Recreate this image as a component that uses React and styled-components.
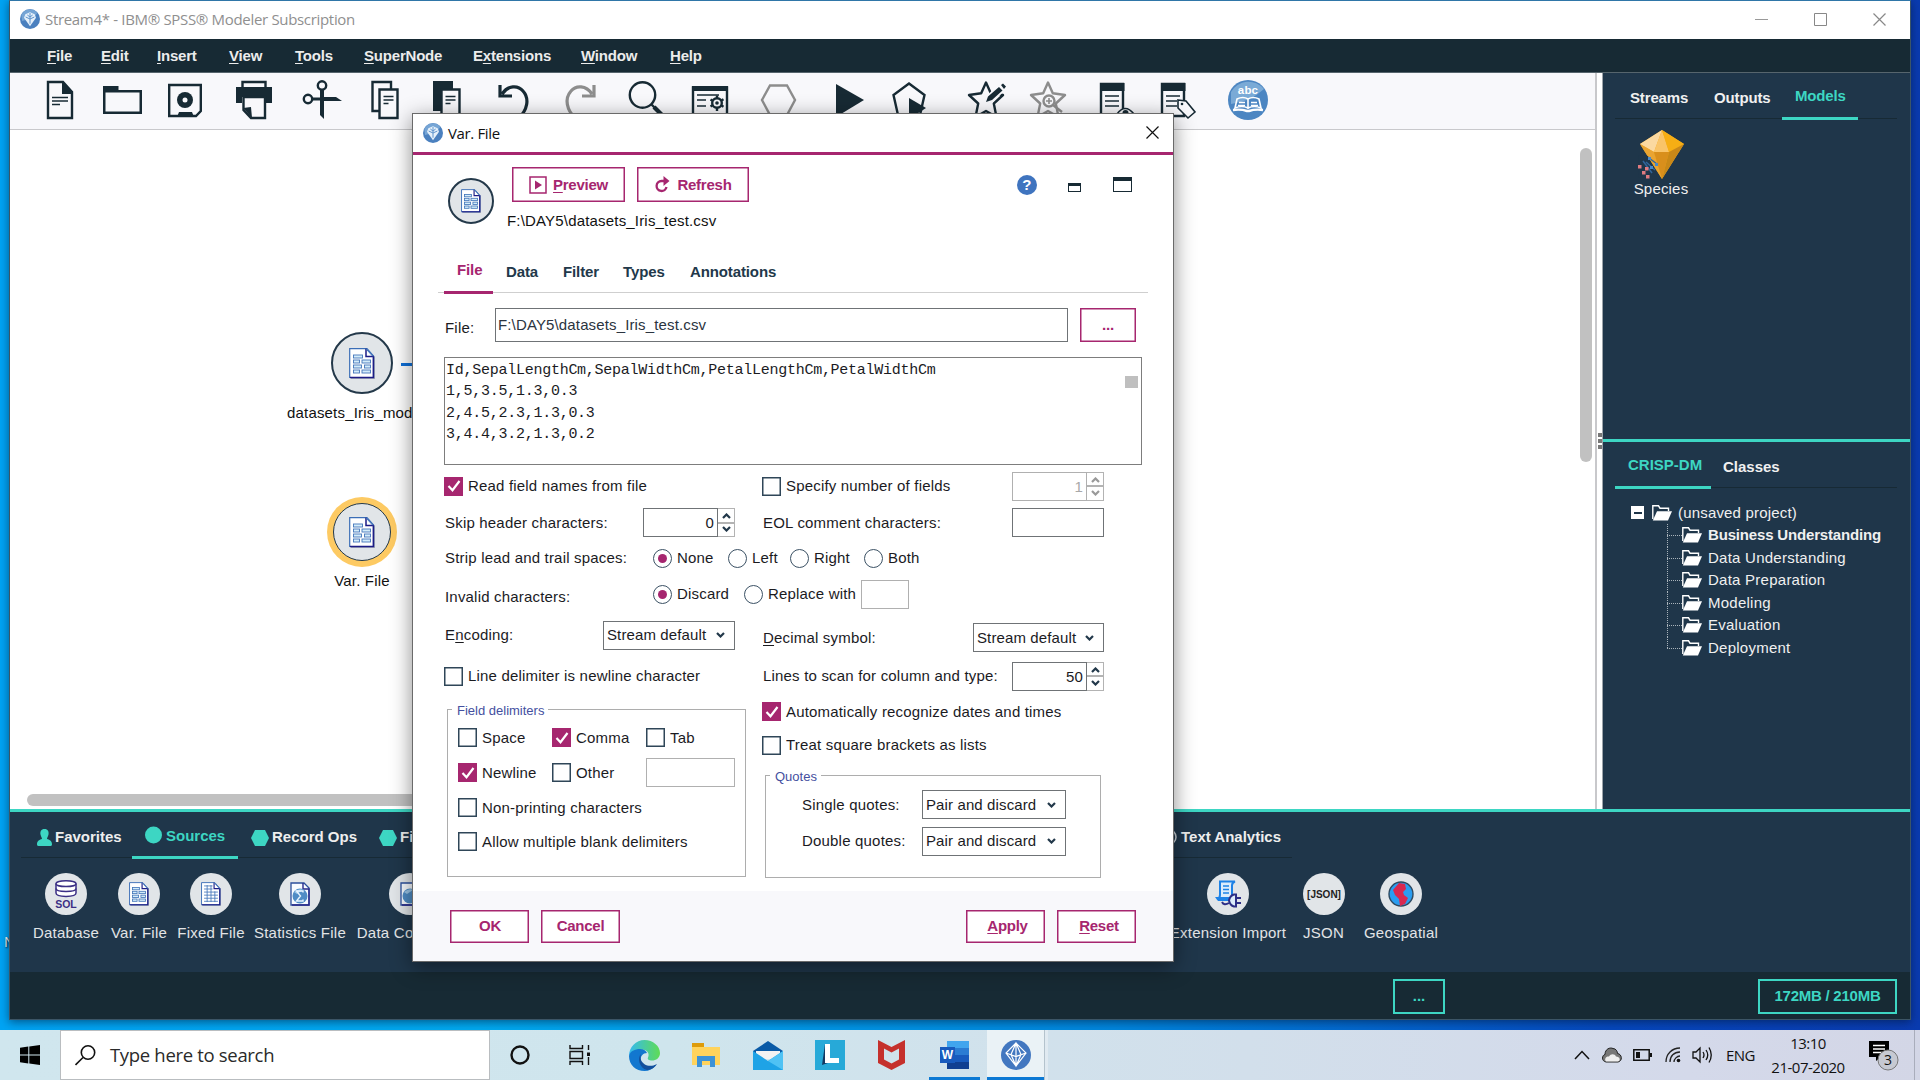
import React from "react";
import styled, { createGlobalStyle, css } from "styled-components";

const C = {
  ink: "#172a34",
  panel: "#1f364a",
  teal: "#3dd6c3",
  magenta: "#a6266f",
  light: "#f8f8fb",
  text: "#1b1b1f",
  disc: "#e1e5e8",
};
const ARIAL = '"Liberation Sans", Arial, sans-serif';
const SEGOE = '"Open Sans", "Noto Sans", sans-serif';

const Global = createGlobalStyle`
  * { box-sizing: border-box; }
  html, body { margin: 0; padding: 0; overflow: hidden; }
  body { font: 15px/20px ${ARIAL}; letter-spacing: 0.18px; color: ${C.text}; }
  svg { display: block; flex: none; }
  u { text-underline-offset: 2px; text-decoration-thickness: 1px; }
`;

/* ---------- shell ---------- */
const Desktop = styled.div`
  position: relative;
  width: 1920px;
  height: 1080px;
  overflow: hidden;
  display: flex;
  flex-direction: column;
  background: linear-gradient(90deg, #00a4f4 0, #00aaf0 25%, #0086dd 58%, #0648bd 84%, #0a3bb0 100%);
`;
const DesktopLabel = styled.span`
  position: absolute;
  left: 4px;
  top: 932px;
  color: #fff;
  font: 14px/20px ${SEGOE};
  text-shadow: 1px 1px 2px #000;
`;
const Window = styled.div`
  position: relative;
  margin-left: 9px;
  width: 1902px;
  height: 1020px;
  border: 1px solid #3c5566;
  border-top-color: #2f76a8;
  display: flex;
  flex-direction: column;
  background: #fff;
  box-shadow: 0 2px 9px rgba(0, 20, 50, 0.55);
`;
const TitleBar = styled.div`
  height: 38px;
  flex: none;
  display: flex;
  align-items: center;
  padding: 0 0 2px 10px;
  font: 15px/20px ${SEGOE};
  letter-spacing: -0.32px;
  color: #8f8f8f;
`;
const TitleText = styled.span`
  margin-left: 5px;
  flex: 1;
  white-space: nowrap;
`;
const WinControls = styled.div`
  display: flex;
  gap: 46px;
  margin-right: 24px;
`;
const MenuBar = styled.nav`
  height: 34px;
  flex: none;
  display: flex;
  align-items: center;
  padding-left: 37px;
  background: ${C.ink};
  border-bottom: 1px solid #56656d;
  color: #ececec;
  font-weight: bold;
  letter-spacing: -0.2px;
`;
const MenuItem = styled.span`
  width: ${(p) => p.$w}px;
  white-space: nowrap;
`;
const Middle = styled.div`
  flex: 1;
  display: flex;
  min-height: 0;
`;
const Workspace = styled.div`
  width: 1587px;
  display: flex;
  flex-direction: column;
  border-right: 2px solid #c8c8cb;
`;
const Toolbar = styled.div`
  height: 57px;
  flex: none;
  display: flex;
  padding: 7px 0 0 30px;
  background: ${C.light};
  border-bottom: 1px solid #c9c9cc;
`;
const Tool = styled.svg.attrs({ width: 40, height: 40, viewBox: "0 0 40 40", fill: "none" })`
  margin-left: ${(p) => p.$gap || 0}px;
  color: ${(p) => (p.$off ? "#8d8d8d" : C.ink)};
  stroke: currentColor;
  stroke-width: ${(p) => p.$sw || 2.4};
  .f { fill: currentColor; stroke: none; }
  .w { fill: ${C.light}; }
  .t { stroke-width: 1.6; }
`;
const Canvas = styled.div`
  position: relative;
  flex: 1;
`;
const VThumb = styled.div`
  position: absolute;
  right: 3px;
  top: 18px;
  width: 12px;
  height: 314px;
  border-radius: 6px;
  background: #c1c1c1;
`;
const HThumb = styled.div`
  position: absolute;
  left: 17px;
  bottom: 3px;
  width: 820px;
  height: 12px;
  border-radius: 6px;
  background: #c1c1c1;
`;
const CanvasNode = styled.div`
  position: absolute;
  left: ${(p) => p.$x}px;
  top: ${(p) => p.$y}px;
  display: flex;
  flex-direction: column;
  align-items: ${(p) => (p.$start ? "flex-start" : "center")};
  color: #111;
  white-space: nowrap;
`;
const Link = styled.div`
  position: absolute;
  left: 391px;
  top: 233px;
  width: 40px;
  height: 3px;
  background: #0f6fd8;
`;
const Disc = styled.div`
  width: ${(p) => p.$d}px;
  height: ${(p) => p.$d}px;
  flex: none;
  border-radius: 50%;
  background: ${C.disc};
  border: ${(p) => p.$b || 0}px solid #24394a;
  display: flex;
  align-items: center;
  justify-content: center;
  margin: ${(p) => p.$mt || 0}px 0 0 ${(p) => p.$ml || 0}px;
  ${(p) => p.$sel && css`box-shadow: 0 0 0 6px #fdca63;`}
`;
const NodeName = styled.span`
  margin-top: ${(p) => p.$mt}px;
`;
const Gutter = styled.div`
  width: 6px;
  display: flex;
  flex-direction: column;
  align-items: center;
  gap: 2px;
  padding-top: 360px;
  border-right: 1px solid #9da4aa;
  i { width: 4px; height: 4px; background: #777; }
`;

/* ---------- side panels ---------- */
const Side = styled.aside`
  flex: 1;
  background: ${C.panel};
  color: #f0f0f0;
  display: flex;
  flex-direction: column;
`;
const SidePane = styled.section`
  height: ${(p) => p.$h};
  flex: ${(p) => (p.$h ? "none" : 1)};
  padding: 0 13px 0 12px;
`;
const Crisp = styled(SidePane)`
  border-top: 3px solid ${C.teal};
`;
const TabStrip = styled.div`
  display: flex;
  height: ${(p) => p.$h}px;
  width: ${(p) => (p.$w ? p.$w + "px" : "auto")};
  border-bottom: 1px solid ${(p) => p.$line || "#172a35"};
  font-weight: bold;
  letter-spacing: ${(p) => p.$ls || 0}px;
`;
const Tab = styled.div`
  width: ${(p) => p.$w}px;
  flex: none;
  display: flex;
  align-items: flex-end;
  gap: ${(p) => p.$g || 0}px;
  padding-left: ${(p) => p.$pl}px;
  padding-bottom: ${(p) => p.$pb}px;
  white-space: nowrap;
  svg { margin-bottom: 1px; }
  ${(p) => p.$on && css`
    color: ${p.$on};
    border-bottom: 3px solid ${p.$on};
    margin-bottom: -2px;
  `}
`;
const Model = styled.div`
  width: 60px;
  margin: 10px 0 0 16px;
  display: flex;
  flex-direction: column;
  align-items: center;
`;
const Tree = styled.div`
  padding: 13px 0 0 16px;
`;
const TreeRoot = styled.div`
  display: flex;
  align-items: center;
  height: 23px;
  span { margin-left: 6px; }
`;
const Minus = styled.i`
  width: 13px;
  height: 13px;
  margin-right: 8px;
  background: #fff;
  display: flex;
  align-items: center;
  justify-content: center;
  &::after { content: ""; width: 8px; height: 2px; background: ${C.panel}; }
`;
const Branches = styled.div`
  margin-left: 36px;
`;
const Branch = styled.div`
  height: 22.5px;
  display: flex;
  align-items: center;
  font-weight: ${(p) => (p.$b ? "bold" : "normal")};
  letter-spacing: ${(p) => (p.$b ? -0.17 : 0.25)}px;
  span { margin-left: 6px; white-space: nowrap; }
`;
const Twig = styled.i`
  align-self: stretch;
  width: 15px;
  background:
    repeating-linear-gradient(90deg, #aab4bb 0 1px, transparent 1px 2px) 0 11px / 15px 1px no-repeat,
    repeating-linear-gradient(180deg, #aab4bb 0 1px, transparent 1px 2px) 0 0 / 1px ${(p) => (p.$last ? "12px" : "100%")} no-repeat;
`;

/* ---------- palette and status ---------- */
const Palette = styled.section`
  height: 163px;
  flex: none;
  background: ${C.panel};
  border-top: 3px solid ${C.teal};
  color: #eee;
`;
const PaletteTabs = styled(TabStrip)`
  margin-left: 11px;
`;
const PaletteItems = styled.div`
  display: flex;
  padding: 15px 0 0 17px;
`;
const PaletteItem = styled.div`
  width: ${(p) => p.$w}px;
  margin-left: ${(p) => p.$ml || 0}px;
  flex: none;
  display: flex;
  flex-direction: column;
  align-items: center;
  gap: 8px;
  white-space: nowrap;
  color: #e2e4e6;
  letter-spacing: 0.25px;
`;
const StatusBar = styled.footer`
  height: 47px;
  flex: none;
  display: flex;
  align-items: center;
  justify-content: flex-end;
  gap: 313px;
  padding: 1px 13px 0 0;
  background: ${C.ink};
`;
const StatusBox = styled.div`
  width: ${(p) => p.$w}px;
  height: 35px;
  border: 2px solid ${C.teal};
  color: ${C.teal};
  font-weight: bold;
  letter-spacing: ${(p) => p.$ls || 0}px;
  display: flex;
  align-items: center;
  justify-content: center;
`;

/* ---------- dialog ---------- */
const Dialog = styled.div`
  position: absolute;
  left: 412px;
  top: 113px;
  width: 762px;
  height: 849px;
  border: 1px solid #6a6a6a;
  background: #fff;
  display: flex;
  flex-direction: column;
  box-shadow: 0 5px 20px rgba(0, 0, 0, 0.45);
`;
const DialogTitle = styled.div`
  height: 41px;
  flex: none;
  display: flex;
  align-items: center;
  padding: 0 14px 1px 10px;
  border-bottom: 3px solid ${C.magenta};
  font: 15px/20px ${SEGOE};
  letter-spacing: -0.36px;
  color: #111;
`;
const Head = styled.div`
  height: 92px;
  display: flex;
  padding: 12px 41px 0 35px;
`;
const HeadMain = styled.div`
  flex: 1;
  padding-left: 13px;
  color: #111;
`;
const HeadButtons = styled.div`
  display: flex;
  gap: 12px;
  padding: 0 0 9px 5px;
`;
const HeadTools = styled.div`
  display: flex;
  align-items: flex-end;
  height: 25px;
`;
const Button = styled.button`
  width: ${(p) => p.$w}px;
  height: ${(p) => p.$h}px;
  padding: 0 0 0 ${(p) => p.$pl || 0}px;
  margin-left: ${(p) => p.$ml || 0}px;
  border: 1px solid ${C.magenta};
  box-shadow: inset 0 0 0 0.5px ${C.magenta};
  background: #fff;
  color: ${C.magenta};
  font: bold 15px/20px ${ARIAL};
  letter-spacing: -0.25px;
  display: flex;
  align-items: center;
  justify-content: center;
  gap: ${(p) => p.$g || 0}px;
`;
const Help = styled.span`
  width: 20px;
  height: 20px;
  border-radius: 50%;
  background: #3f74bf;
  color: #fff;
  font: bold 15px/20px ${ARIAL};
  text-align: center;
  margin: 0 31px -3px 0;
`;
const MiniWin = styled.i`
  width: ${(p) => p.$w}px;
  height: ${(p) => p.$h}px;
  border: 1.5px solid ${C.ink};
  border-top-width: ${(p) => p.$t}px;
  margin-right: ${(p) => p.$mr || 0}px;
`;
const DialogTabs = styled(TabStrip)`
  margin: 0 25px;
  padding-left: 6px;
  color: #22384a;
`;
const FileRow = styled.div`
  height: 34px;
  margin: 15px 0 0 32px;
  display: flex;
  align-items: center;
`;
const Cap = styled.span`
  width: ${(p) => (p.$w ? p.$w + "px" : "auto")};
  flex: none;
  white-space: nowrap;
  padding-left: ${(p) => p.$pl || 0}px;
  padding-top: ${(p) => p.$pt || 0}px;
  letter-spacing: 0.19px;
`;
const Field = styled.div`
  width: ${(p) => p.$w}px;
  height: ${(p) => p.$h || 29}px;
  flex: none;
  border: 1px solid ${(p) => (p.$dim ? "#b0b0b0" : "#6f7376")};
  padding: 0 2px;
  display: flex;
  align-items: center;
  letter-spacing: 0.14px;
  color: #2b3440;
  background: #fff;
`;
const TextArea = styled.div`
  width: 698px;
  height: 108px;
  margin: 15px 0 0 31px;
  border: 1px solid #7d7d7d;
  padding: 2px 3px 0 1px;
  display: flex;
  justify-content: space-between;
`;
const Mono = styled.pre`
  margin: 0;
  font: 15px/21.33px "Liberation Mono", "Courier New", monospace;
  letter-spacing: -0.26px;
`;
const AreaThumb = styled.i`
  width: 13px;
  height: 12px;
  margin-top: 16px;
  background: #bfbfbf;
`;
const Form = styled.div`
  padding: 4px 0 0 31px;
  flex: 1;
`;
const Row = styled.div`
  height: ${(p) => p.$h}px;
  display: flex;
  align-items: center;
`;
const Half = styled.div`
  width: ${(p) => p.$w || 318}px;
  flex: none;
  display: flex;
  align-items: center;
  padding-top: ${(p) => p.$pt || 0}px;
`;
const Columns = styled.div`
  display: flex;
`;
const Col = styled.div`
  width: ${(p) => p.$w}px;
`;
const CheckWrap = styled.label`
  display: flex;
  align-items: center;
  gap: ${(p) => p.$g || 5}px;
  width: ${(p) => (p.$w ? p.$w + "px" : "auto")};
  flex: none;
  white-space: nowrap;
`;
const Box = styled.i`
  width: 19px;
  height: 19px;
  border: 1px solid ${(p) => (p.$on ? C.magenta : "#2f4658")};
  box-shadow: inset 0 0 0 0.5px ${(p) => (p.$on ? C.magenta : "#2f4658")};
  background: ${(p) => (p.$on ? C.magenta : "#fff")};
  display: flex;
  align-items: center;
  justify-content: center;
`;
const Dot = styled.i`
  width: 19px;
  height: 19px;
  border: 1px solid #3b5164;
  border-radius: 50%;
  display: flex;
  align-items: center;
  justify-content: center;
  &::after {
    content: "";
    width: 9px;
    height: 9px;
    border-radius: 50%;
    background: ${(p) => (p.$on ? C.magenta : "transparent")};
  }
`;
const SpinWrap = styled.div`
  width: 92px;
  height: 29px;
  flex: none;
  display: flex;
`;
const SpinValue = styled.div`
  flex: 1;
  border: 1px solid ${(p) => (p.$off ? "#b0b0b0" : "#6f7376")};
  color: ${(p) => (p.$off ? "#a8a8a8" : C.text)};
  text-align: right;
  padding: 4px 3px 0 0;
`;
const SpinArrows = styled.div`
  width: 17px;
  display: flex;
  flex-direction: column;
  justify-content: space-between;
  border: 1px solid #b3b3b3;
  border-left: 0;
  background: linear-gradient(#b3b3b3, #b3b3b3) 0 50% / 100% 2px no-repeat;
  padding: 4px 0 4px 4px;
`;
const SelectBox = styled.div`
  width: ${(p) => p.$w}px;
  height: 29px;
  flex: none;
  border: 1px solid #6f7376;
  padding: 0 9px 0 3px;
  display: flex;
  align-items: center;
  justify-content: space-between;
  white-space: nowrap;
  letter-spacing: 0.12px;
`;
const Group = styled.fieldset`
  margin: ${(p) => p.$mt}px 0 0 3px;
  width: ${(p) => p.$w}px;
  height: ${(p) => p.$h}px;
  border: 1px solid #adadad;
  padding: 3px 0 0 ${(p) => p.$indent}px;
  min-width: 0;
`;
const Legend = styled.legend`
  margin-left: ${(p) => 4 - p.$indent}px;
  padding: 0 4px 0 5px;
  height: 16px;
  font-size: 13px;
  line-height: 20px;
  letter-spacing: 0;
  color: #4450a0;
`;
const DialogFoot = styled.div`
  height: 70px;
  flex: none;
  background: ${C.light};
  display: flex;
  align-items: center;
  gap: 12px;
  padding: 0 37px 0 37px;
`;
const Spacer = styled.span`
  flex: 1;
`;

/* ---------- taskbar ---------- */
const Taskbar = styled.div`
  position: relative;
  margin-top: 10px;
  height: 50px;
  display: flex;
  align-items: center;
  background: linear-gradient(90deg, #d0e6ee 0, #cfe5ed 35%, #d2dfeb 65%, #d4d9ea 88%, #d3d6e6 100%);
  font: 15px/24px ${SEGOE};
  color: #111;
`;
const Start = styled.div`
  width: 60px;
  padding-left: 20px;
`;
const Search = styled.div`
  width: 430px;
  height: 50px;
  border: 1px solid #b9bdc0;
  background: #fff;
  display: flex;
  align-items: center;
  padding-left: 14px;
  gap: 14px;
  font-size: 18.5px;
  letter-spacing: -0.32px;
  color: #2a2a2a;
`;
const TaskButton = styled.div`
  width: ${(p) => p.$w}px;
  height: 50px;
  flex: none;
  display: flex;
  align-items: center;
  justify-content: center;
  background: ${(p) => (p.$on ? "#eaf2f6" : "transparent")};
  border-bottom: ${(p) => (p.$run ? "3px solid #0c79d4" : "0")};
  padding-top: ${(p) => (p.$run ? 3 : 0)}px;
  margin-left: ${(p) => p.$ml || 0}px;
`;
const Stacked = styled.i`
  width: 4px;
  height: 50px;
  border-left: 1px solid #b4c3cd;
  background: #e0eaf1;
`;
const Tray = styled.div`
  display: flex;
  align-items: center;
  margin-left: auto;
`;
const TrayIcon = styled.svg`
  margin-right: ${(p) => p.$mr}px;
`;
const Lang = styled.span`
  width: 43px;
  letter-spacing: -0.6px;
`;
const Clock = styled.div`
  width: 78px;
  text-align: center;
  letter-spacing: -0.5px;
  margin-right: 21px;
  white-space: nowrap;
`;
const ShowDesktop = styled.i`
  width: 6px;
  height: 50px;
  margin-left: 14px;
  border-left: 1px solid #a9adbb;
`;

/* ---------- drawings ---------- */
const Gem = ({ s = 20 }) => (
  <svg width={s} height={s} viewBox="0 0 30 30">
    <circle cx="15" cy="15" r="15" fill="#4a80bf" />
    <path d="M2 9A14 14 0 0 1 26 6L20 14 3 18Z" fill="#8db8e0" opacity=".65" />
    <path d="M8 8L15 5L22 8L24 13L15 26L6 13Z" fill="#e5f0fa" />
    <path d="M15 6V22M8.5 12L15 15L21.5 12M11 9L15 12L19 9" stroke="#5f94cd" strokeWidth="1.5" fill="none" />
  </svg>
);
const CloseX = ({ c = "#111", s = 13 }) => (
  <svg width={s} height={s} viewBox="0 0 13 13" stroke={c} strokeWidth="1.2"><path d="M.5.5l12 12M12.5.5l-12 12" /></svg>
);
const Doc = ({ w = 26, h = 31, dense }) => (
  <svg width={w} height={h} viewBox="0 0 26 31">
    <path d="M2 2h17l7 7v22H2z" fill="#a4abb8" />
    <path d="M.7.7H18L24.5 8v21.500H.7z" fill="#fff" stroke="#3a6db6" strokeWidth="1.200" />
    <path d="M17 .8V8.500h7.400M24.400 8v21.500H1" fill="none" stroke="#1d1c86" strokeWidth="1.500" />
    <path d="M17 1l7 7.500" stroke="#3a6db6" strokeWidth="1" />
    <g fill="#d3ecf9" stroke="#4577ba" strokeWidth={w < 24 ? 1.1 : 0.9}>
      {dense ? (
        <path d="M4 5h11M4 9h11M4 13h18M4 17h18M4 21h18M4 25h18M8 4v22M13 4v22M18 12v14" />
      ) : (
        <>
          <rect x="4.500" y="7" width="9" height="3" /><rect x="4.500" y="12" width="6" height="3" />
          <rect x="13" y="12" width="8.500" height="3" /><rect x="4.500" y="17" width="8" height="3" />
          <rect x="15.500" y="17" width="6" height="3" /><rect x="4.500" y="22" width="6" height="3" />
          <rect x="13" y="22" width="8.500" height="3" />
        </>
      )}
    </g>
  </svg>
);
const SphereDoc = ({ mark }) => (
  <svg width="20" height="24" viewBox="0 0 20 24">
    <path d="M1 1h13l5 5v17H1z" fill="#f7fbff" stroke="#2b4f9c" strokeWidth="1.3" />
    <path d="M13 1v6h6v16H2" fill="none" stroke="#28288a" strokeWidth="1.4" />
    <circle cx="10" cy="14" r="7.500" fill="#4f8cc5" />
    <path d="M4 10q5-4 9-2l-6 4z" fill="#9cc6e8" />
    {mark && <path d="M13 10.500V9H6.500l4 5-4 5H13v-1.500" fill="none" stroke="#e8f4ff" strokeWidth="1.400" />}
  </svg>
);
const Sql = () => (
  <svg width="24" height="28" viewBox="0 0 24 28" fill="#fff" stroke="#3b2f85" strokeWidth="1.500">
    <path d="M2 3.500v9.500c0 4.500 20 4.500 20 0V3.500" />
    <path d="M2 8.500c0 4 20 4 20 0" fill="none" />
    <ellipse cx="12" cy="3.700" rx="10" ry="2.900" />
    <text x="12" y="27.500" textAnchor="middle" fontFamily="Liberation Sans" fontWeight="bold" fontSize="10.500" letterSpacing="0" fill="#3b2f85" stroke="none">SQL</text>
  </svg>
);
const Folder = () => (
  <svg width="20" height="16" viewBox="0 0 20 16">
    <path d="M.8 14V.8h5.700l1.500 2.400h8.500V6" fill="none" stroke="#fff" strokeWidth="1.400" />
    <path d="M5 6.300h15l-4 9.200H.8z" fill="#fff" />
  </svg>
);
const Chev = ({ up, c = "#22384a" }) => (
  <svg width="9" height="6" viewBox="0 0 9 6"><path d={up ? "M1 5l3.500-3.500L8 5" : "M1 1l3.500 3.500L8 1"} fill="none" stroke={c} strokeWidth="2.200" /></svg>
);
const Hex = () => (
  <svg width="18" height="16" viewBox="0 0 18 16"><path d="M4 0h10l4 8-4 8H4L0 8z" fill={C.teal} /></svg>
);
const STAR = "M20 2.500l4.800 10.800 12.200 1.700-9.200 8.500 2.700 13.500L20 31 9.500 37l2.700-13.500L3 15l12.200-1.700z";

const Check = ({ on, w, children }) => (
  <CheckWrap $w={w}>
    <Box $on={on}>
      {on && <svg width="14" height="12" viewBox="0 0 14 12"><path d="M1.500 6l4 4.200L12.500 1" fill="none" stroke="#fff" strokeWidth="2.200" /></svg>}
    </Box>
    <span>{children}</span>
  </CheckWrap>
);
const Radio = ({ on, w, children }) => (
  <CheckWrap $w={w}><Dot $on={on} /><span>{children}</span></CheckWrap>
);
const Spin = ({ value, off }) => (
  <SpinWrap>
    <SpinValue $off={off}>{value}</SpinValue>
    <SpinArrows><Chev up c={off ? "#999" : undefined} /><Chev c={off ? "#999" : undefined} /></SpinArrows>
  </SpinWrap>
);
const Select = ({ w, children }) => (
  <SelectBox $w={w}><span>{children}</span><Chev /></SelectBox>
);

const Tools = () => (
  <Toolbar>
    <Tool><path d="M8 2h15l9 10v26H8z" /><path className="f" d="M22 1l11 11v2H22z" /><path className="t" d="M12 17.500h16M12 21h16M12 24.500h8" /></Tool>
    <Tool $gap={22}><path className="f" fillRule="evenodd" d="M1 6h15.500v4H40v24H1zM3.500 12.500v19h34v-19z" /></Tool>
    <Tool $gap={23}><path d="M4.200 5h31.600v26L31 36H4.200z" /><circle className="f" cx="20" cy="20" r="8" /><circle cx="20" cy="20" r="2.500" fill={C.light} stroke="none" /><path className="f" d="M12 37l2-5h13l2 5z" /></Tool>
    <Tool $gap={29}><path d="M8.500 8V2h23v6" /><path className="f" d="M2 7h36v16h-6v-6H8v6H2z" /><path className="w" d="M9.500 17h21.500v21H17L9.500 30z" /><path className="f" d="M9 28l8-1 1 11z" /></Tool>
    <Tool $gap={28}><circle cx="20" cy="5.500" r="4.200" /><circle cx="6" cy="19" r="4.200" /><path className="f" d="M18 10h4v7h12l6 4H22v18l-4-4V20.500h-8v-3h8z" /></Tool>
    <Tool $gap={23}><path d="M26 9V2H7.500v29H14" /><path className="w" d="M14.500 9.500h18V38h-18z" /><path className="t" d="M18.500 16.500h10M18.500 20h10M18.500 23.500h5" /></Tool>
    <Tool $gap={22}><path className="f" d="M6 1h20v8h-11v22H6z" /><path className="w" d="M14.500 9.500h18V38h-18z" /><path className="t" d="M18.500 16.500h10M18.500 20h10M18.500 23.500h5" /></Tool>
    <Tool $gap={28} $sw={3.2}><path d="M5 5v11h12M7 14C13 5 23 5 28 11c7 8 4 19-4 27" /></Tool>
    <Tool $gap={24} $off $sw={3.2}><path d="M35 5v11H23M33 14C27 5 17 5 12 11c-7 8-4 19 4 27" /></Tool>
    <Tool $gap={27}><circle cx="16.500" cy="15" r="12.700" /><path d="M26.500 28.500l3-3L40 36l-3 3z" className="f" /><path d="M25 24l4 4" /></Tool>
    <Tool $gap={24}><path d="M3 7.500h34V38H3z" /><path className="f" d="M2 6h36v5H2z" /><path className="t" d="M7 15h22M7 20h9M7 26h9" /><circle cx="27" cy="23" r="4.800" /><circle className="f" cx="27" cy="23" r="1.800" /><path d="M27 15.500v2.500M27 28v3M20.500 19.500l2 1.200M31.500 25.500l2 1.200M20.500 26.500l2-1.200M31.500 20.500l2-1.200" /></Tool>
    <Tool $gap={28} $off><path d="M12 5.500h17L37 20 29 35H12L4 20z" /></Tool>
    <Tool $gap={32}><path className="f" d="M6 4l28 16L6 37z" /></Tool>
    <Tool $gap={19}><path d="M20 3.500l15.500 11.500L31 35H9L4.500 15z" /><path className="f" d="M20 18l17 10-17 11z" /></Tool>
    <Tool $gap={37}><path strokeLinejoin="round" d={STAR} /><path d="M22 21L37 6" stroke={C.light} strokeWidth="9" style={{ strokeWidth: 9 }} /><path className="f" d="M33 7l3.500 3.500L26 20l-6 2 2-5.500zM35 5l2-1.500 3 3L38 9z" /></Tool>
    <Tool $gap={22} $off><path strokeLinejoin="round" d={STAR} /><circle className="w" cx="21" cy="21" r="5.500" /><path className="t" d="M21 18v6M18 21h6" /><path d="M25 25l9 7" /></Tool>
    <Tool $gap={29}><path d="M4 4h22v34H4z" /><path className="f" d="M3 3h24.500v8H3z" /><path className="t" d="M8 16h14M8 21h14M8 26h14" /><path className="w t" d="M20 34q8-11 17 0-8 8-17 0z" /><circle className="f" cx="28.500" cy="33" r="3" /></Tool>
    <Tool $gap={21}><path d="M4 4h22v32H4z" /><path className="f" d="M3 3h24.500v8H3z" /><path className="t" d="M8 16h14M8 21h11M8 26h11" /><path className="w t" d="M20 20l8 1 9 11-7 6-10-10z" /><circle className="f" cx="24" cy="24" r="1.300" /></Tool>
    <Tool $gap={30}>
      <circle cx="20" cy="20" r="20" fill="#4c86c2" stroke="none" />
      <path d="M3 12A20 20 0 0 1 36 9Q22 22 3 24z" fill="#8fb9de" stroke="none" opacity=".7" />
      <text x="20" y="14" textAnchor="middle" fontFamily="Liberation Sans" fontWeight="bold" fontSize="11.500" fill="#fff" stroke="none">abc</text>
      <path className="t" d="M9 19q6-3 11 0v9q-6-3-13 0zM31 19q-6-3-11 0v9q6-3 13 0z" style={{ stroke: "#fff" }} />
      <path className="t" d="M11 22.500h6M10 25.500h7M23 22.500h6M23 25.500h7" style={{ stroke: "#fff" }} />
      <path d="M5 30q8-1 14 1h2q6-2 14-1" style={{ stroke: "#fff" }} />
    </Tool>
  </Toolbar>
);

const menus = [
  [54, <><u>F</u>ile</>], [56, <><u>E</u>dit</>], [72, <><u>I</u>nsert</>], [66, <><u>V</u>iew</>], [69, <><u>T</u>ools</>],
  [109, <><u>S</u>uperNode</>], [108, <>E<u>x</u>tensions</>], [89, <><u>W</u>indow</>], [40, <><u>H</u>elp</>],
];
const phases = ["Business Understanding", "Data Understanding", "Data Preparation", "Modeling", "Evaluation", "Deployment"];

const SidePanels = () => (
  <Side>
    <SidePane $h="366px">
      <TabStrip $h={46} $ls={-0.15}>
        <Tab $w={84} $pl={15} $pb={10}>Streams</Tab>
        <Tab $w={83} $pl={15} $pb={10}>Outputs</Tab>
        <Tab $w={76} $pl={13} $pb={11} $on={C.teal}>Models</Tab>
      </TabStrip>
      <Model>
        <svg width="46" height="50" viewBox="0 0 46 50">
          <path d="M24 1L2 15l22 35 22-35z" fill="#f5a81b" />
          <path d="M24 1L2 15l14 8z" fill="#fbd9a0" /><path d="M24 1l-8 22h15z" fill="#f9c468" />
          <path d="M24 1l22 14-15 8z" fill="#f6ae14" /><path d="M2 15l14 8 8 27z" fill="#e9a431" />
          <path d="M16 23h15l-7 27z" fill="#d98f1c" /><path d="M46 15l-15 8-7 27z" fill="#c98818" />
          <path d="M0 26l10 1 9 20-18 2z" fill={C.panel} />
          <path d="M11 29l8 6M8 33l9 8M5 32l9 12" stroke="#31659b" strokeWidth="1.500" />
          <path d="M0 36h3.500v3.500H0zM7 38h3.500v3.500H7zM4 42h3.500v3.500H4zM8 46h3.500v3.500H8z" fill="#e07b80" />
          <path d="M10 28h3v3h-3zM17 34h3v3h-3zM12 37h3v3h-3z" fill="#4b89c8" />
        </svg>
        Species
      </Model>
    </SidePane>
    <Crisp>
      <TabStrip $h={46}>
        <Tab $w={96} $pl={13} $pb={11} $on={C.teal}>CRISP-DM</Tab>
        <Tab $w={90} $pl={12} $pb={10}>Classes</Tab>
      </TabStrip>
      <Tree>
        <TreeRoot><Minus /><Folder /><span>(unsaved project)</span></TreeRoot>
        <Branches>
          {phases.map((p, i) => (
            <Branch key={p} $b={i === 0}><Twig $last={i === 5} /><Folder /><span>{p}</span></Branch>
          ))}
        </Branches>
      </Tree>
    </Crisp>
  </Side>
);

const Sources = () => (
  <Palette>
    <PaletteTabs $h={46} $w={1271}>
      <Tab $w={111} $pl={16} $pb={10} $g={3}>
        <svg width="15" height="17" viewBox="0 0 15 17"><path d="M7.500 0C11 0 12 2.500 11.500 5.500c-.4 2-1.500 3-1.500 4.500 3 .8 5 2 5 5.500 0 1-1 1.500-2 1.500H2c-1 0-2-.5-2-1.500C0 12 2 10.800 5 10c0-1.500-1.100-2.500-1.500-4.500C3 2.500 4 0 7.500 0z" fill={C.teal} /></svg>
        Favorites
      </Tab>
      <Tab $w={106} $pl={13} $pb={10} $g={4} $on={C.teal}>
        <svg width="17" height="20" viewBox="0 0 17 20"><circle cx="8.500" cy="10" r="8.500" fill={C.teal} /></svg>
        Sources
      </Tab>
      <Tab $w={128} $pl={13} $pb={10} $g={3}><Hex />Record Ops</Tab>
      <Tab $w={792} $pl={13} $pb={10} $g={3}><Hex />Field Ops</Tab>
      <Tab $w={120} $pl={2} $pb={10} $g={3}>
        <svg width="18" height="18" viewBox="0 0 18 18"><circle cx="8.500" cy="9" r="7.500" fill="none" stroke="#ccd3d8" strokeWidth="1.500" /></svg>
        Text Analytics
      </Tab>
    </PaletteTabs>
    <PaletteItems>
      <PaletteItem $w={78}><Disc $d={42}><Sql /></Disc>Database</PaletteItem>
      <PaletteItem $w={68}><Disc $d={42}><Doc w={20} h={24} /></Disc>Var. File</PaletteItem>
      <PaletteItem $w={76}><Disc $d={42}><Doc w={20} h={24} dense /></Disc>Fixed File</PaletteItem>
      <PaletteItem $w={102}><Disc $d={42}><SphereDoc mark /></Disc>Statistics File</PaletteItem>
      <PaletteItem $w={117}><Disc $d={42}><SphereDoc /></Disc>Data Collection</PaletteItem>
      <PaletteItem $w={126} $ml={697}>
        <Disc $d={42}>
          <svg width="28" height="28" viewBox="0 0 28 28" fill="none">
            <path d="M6 1.500h15q-3 1-3 4V19H3q3-1 3-4z" fill="#dcecfb" stroke="#1e82e6" strokeWidth="2" />
            <path d="M9 6h6M9 9.500h6M9 13h6" stroke="#1e82e6" strokeWidth="1.600" />
            <path d="M1 17h15v4H4z" fill="#1e82e6" />
            <path d="M8 22q2 4 7 1M22 18h5M22 23h5" stroke="#2c2e86" strokeWidth="2" />
            <path d="M22 14.500v12h-2q-4-1-5-6 1-5 5-6z" fill="#dcecfb" stroke="#2c2e86" strokeWidth="2" />
          </svg>
        </Disc>
        Extension Import
      </PaletteItem>
      <PaletteItem $w={65}>
        <Disc $d={42}><svg width="34" height="14" viewBox="0 0 34 14"><text x="17" y="11" textAnchor="middle" fontFamily="Liberation Sans" fontWeight="bold" fontSize="10" letterSpacing="0" fill="#222">[JSON]</text></svg></Disc>
        JSON
      </PaletteItem>
      <PaletteItem $w={90}>
        <Disc $d={42}>
          <svg width="26" height="26" viewBox="0 0 26 26"><circle cx="13" cy="13" r="12" fill="#2a9df0" stroke="#2f4a60" strokeWidth="1.400" /><path d="M11 2l6 1 1 5-3 3 1 3 4 3-3 6-5 2-1-7-4-4-2-5z" fill="#d8284f" /></svg>
        </Disc>
        Geospatial
      </PaletteItem>
    </PaletteItems>
  </Palette>
);

const VarFileDialog = () => (
  <Dialog>
    <DialogTitle><Gem /><TitleText>Var. File</TitleText><CloseX /></DialogTitle>
    <Head>
      <Disc $d={46} $b={2} $mt={11}><Doc w={20} h={24} /></Disc>
      <HeadMain>
        <HeadButtons>
          <Button $w={113} $h={35} $g={6}>
            <svg width="18" height="18" viewBox="0 0 18 18"><path d="M1 1h16v16H1z" fill="none" stroke={C.magenta} strokeWidth="1.500" /><path d="M6 4.500l7 4.500-7 4.500z" fill={C.magenta} /></svg>
            <span><u>P</u>review</span>
          </Button>
          <Button $w={112} $h={35} $g={7}>
            <svg width="16" height="17" viewBox="0 0 16 17"><path d="M11 5H7.500a5 5 0 1 0 5 6" fill="none" stroke={C.magenta} strokeWidth="2.300" /><path d="M9.500 0l6 5-6 5z" fill={C.magenta} /></svg>
            Refresh
          </Button>
        </HeadButtons>
        F:\DAY5\datasets_Iris_test.csv
      </HeadMain>
      <HeadTools><Help>?</Help><MiniWin $w={13} $h={9} $t={3} $mr={32} /><MiniWin $w={19} $h={15} $t={4} /></HeadTools>
    </Head>
    <DialogTabs $h={46} $line="#cfcfcf" $ls={-0.12}>
      <Tab $w={49} $pl={13} $pb={11} $on={C.magenta}>File</Tab>
      <Tab $w={57} $pl={13} $pb={10}>Data</Tab>
      <Tab $w={60} $pl={13} $pb={10}>Filter</Tab>
      <Tab $w={67} $pl={13} $pb={10}>Types</Tab>
      <Tab $w={110} $pl={13} $pb={10}>Annotations</Tab>
    </DialogTabs>
    <FileRow>
      <Cap $w={50} $pt={5}>File:</Cap>
      <Field $w={573} $h={34}>F:\DAY5\datasets_Iris_test.csv</Field>
      <Button $w={56} $h={34} $ml={12}>...</Button>
    </FileRow>
    <TextArea>
      <Mono>{"Id,SepalLengthCm,SepalWidthCm,PetalLengthCm,PetalWidthCm\n1,5,3.5,1.3,0.3\n2,4.5,2.3,1.3,0.3\n3,4.4,3.2,1.3,0.2"}</Mono>
      <AreaThumb />
    </TextArea>
    <Form>
      <Row $h={34}>
        <Half><Check on>Read field names from file</Check></Half>
        <Half $w={342}><Check w={250}>Specify number of fields</Check><Spin value="1" off /></Half>
      </Row>
      <Row $h={39}>
        <Half><Cap $w={199} $pl={1}>Skip header characters:</Cap><Spin value="0" /></Half>
        <Half $w={342}><Cap $w={250} $pl={1}>EOL comment characters:</Cap><Field $w={92} /></Half>
      </Row>
      <Row $h={32}>
        <Cap $w={209} $pl={1}>Strip lead and trail spaces:</Cap>
        <Radio on w={75}>None</Radio><Radio w={62}>Left</Radio><Radio w={74}>Right</Radio><Radio>Both</Radio>
      </Row>
      <Row $h={40}>
        <Cap $w={209} $pl={1} $pt={6}>Invalid characters:</Cap>
        <Radio on w={91}>Discard</Radio><Radio w={117}>Replace with</Radio><Field $w={48} $dim />
      </Row>
      <Row $h={42}>
        <Half><Cap $w={159} $pl={1}>E<u>n</u>coding:</Cap><Select w={132}>Stream default</Select></Half>
        <Half $w={342} $pt={5}><Cap $w={211} $pl={1}><u>D</u>ecimal symbol:</Cap><Select w={131}>Stream default</Select></Half>
      </Row>
      <Row $h={40}>
        <Half><Check>Line delimiter is newline character</Check></Half>
        <Half $w={342}><Cap $w={250} $pl={1}>Lines to scan for column and type:</Cap><Spin value="50" /></Half>
      </Row>
      <Columns>
        <Col $w={318}>
          <Group $mt={5} $w={299} $h={176} $indent={10}>
            <Legend $indent={10}>Field delimiters</Legend>
            <Row $h={35}><Check w={94}>Space</Check><Check on w={94}>Comma</Check><Check>Tab</Check></Row>
            <Row $h={35}><Check on w={94}>Newline</Check><Check w={94}>Other</Check><Field $w={89} $dim /></Row>
            <Row $h={35}><Check>Non-printing characters</Check></Row>
            <Row $h={33}><Check>Allow multiple blank delimiters</Check></Row>
          </Group>
        </Col>
        <Col $w={342}>
          <Row $h={31}><Check on>Automatically recognize dates and times</Check></Row>
          <Row $h={36}><Check>Treat square brackets as lists</Check></Row>
          <Group $mt={4} $w={336} $h={111} $indent={36}>
            <Legend $indent={36}>Quotes</Legend>
            <Row $h={37}><Cap $w={120}>Single quotes:</Cap><Select w={144}>Pair and discard</Select></Row>
            <Row $h={36}><Cap $w={120}>Double quotes:</Cap><Select w={144}>Pair and discard</Select></Row>
          </Group>
        </Col>
      </Columns>
    </Form>
    <DialogFoot>
      <Button $w={79} $h={33} $pl={1}>OK</Button>
      <Button $w={79} $h={33}>Cancel</Button>
      <Spacer />
      <Button $w={79} $h={33} $pl={4}><span><u>A</u>pply</span></Button>
      <Button $w={79} $h={33} $pl={5}><span><u>R</u>eset</span></Button>
    </DialogFoot>
  </Dialog>
);

const Tasks = () => (
  <Taskbar>
    <Start><svg width="20" height="20" viewBox="0 0 20 20"><path d="M0 2.800L8.300 1.600V9.500H0zM9.300 1.500L20 0v9.500H9.300zM0 10.500h8.300v8L0 17.300zM9.300 10.500H20V20L9.300 18.600z" fill="#000" /></svg></Start>
    <Search>
      <svg width="21" height="21" viewBox="0 0 21 21" fill="none" stroke="#111" strokeWidth="1.600"><circle cx="13" cy="7.500" r="6.700" /><path d="M8 12.500L.5 20" /></svg>
      Type here to search
    </Search>
    <TaskButton $w={60}><svg width="20" height="20" viewBox="0 0 20 20"><circle cx="10" cy="10" r="8.500" fill="none" stroke="#111" strokeWidth="2.400" /></svg></TaskButton>
    <TaskButton $w={60}>
      <svg width="22" height="20" viewBox="0 0 22 20" fill="none" stroke="#111" strokeWidth="1.400"><path d="M1 0v3.500h12.500V0M1 20v-3.500h12.500V20M1 6.500h12.500v7H1zM19.500 0v5M19.500 12v8" /><path d="M18 7.500h3v3.500h-3z" fill="#111" stroke="none" /></svg>
    </TaskButton>
    <TaskButton $w={68}>
      <svg width="31" height="31" viewBox="0 0 31 31">
        <defs><linearGradient id="eg" x1="0" x2="1"><stop offset="0" stopColor="#35b9ef" /><stop offset="1" stopColor="#5fdc55" /></linearGradient></defs>
        <path d="M15.500 0C24 0 31 6 31 13c0 5-4 7.500-8 7.500-3 0-5-1-4-3 2-4-1-8-6-8C7 9.500 2 12 0 16 0 7 7 0 15.500 0z" fill="url(#eg)" />
        <path d="M0 16C1 11 6 9 11 9c4 0 6 2 7 4-4 0-7 3-6 8s7 8 15 4c-3 4-7 6-11.500 6C7 31 0 25 0 16z" fill="#1277cf" />
        <path d="M12 14c-4 4-2 14 6 16 5 0 9-4 10-6-7 4-14 1-16-4-1-2-.5-4 0-6z" fill="#134f9c" />
      </svg>
    </TaskButton>
    <TaskButton $w={56}>
      <svg width="28" height="24" viewBox="0 0 28 24"><path d="M0 0h12v4H0z" fill="#dd9b0b" /><path d="M0 4h28v18H0z" fill="#ffd35c" /><path d="M5 13h18v11h-5v-6h-8v6H5z" fill="#3c92d6" /></svg>
    </TaskButton>
    <TaskButton $w={68}>
      <svg width="30" height="29" viewBox="0 0 30 29"><path d="M0 10L15 0l15 10v6H0z" fill="#0a5aa6" /><path d="M3 10h24v8H3z" fill="#f2f2f2" /><path d="M0 10l15 10L30 10v19H0z" fill="#1ea3e6" /><path d="M30 10v19L15 20z" fill="#4fc2f4" /></svg>
    </TaskButton>
    <TaskButton $w={56}>
      <svg width="30" height="30" viewBox="0 0 30 30"><path d="M0 0h30v30H0z" fill="#27a9d8" /><path d="M10 4L7 25l6-2z" fill="#123a63" /><path d="M10 4h5v14h9v5H10z" fill="#fff" /></svg>
    </TaskButton>
    <TaskButton $w={67}>
      <svg width="27" height="30" viewBox="0 0 27 30"><path d="M0 0l13.500 7L27 0v23l-13.500 7L0 23zM6 8.500v11l7.500 4 7.500-4v-11l-7.500 4z" fill="#c5302c" fillRule="evenodd" /></svg>
    </TaskButton>
    <TaskButton $w={51} $run $ml={4}>
      <svg width="30" height="28" viewBox="0 0 30 28"><path d="M7 0h22v7H7z" fill="#41a5ee" /><path d="M7 7h22v7H7z" fill="#2b7cd3" /><path d="M7 14h22v7H7z" fill="#185abd" /><path d="M7 21h22v7H7z" fill="#103f91" /><path d="M0 6h15v16H0z" fill="#185abd" /><text x="7.500" y="18" textAnchor="middle" fontFamily="Liberation Sans" fontWeight="bold" fontSize="12" fill="#fff">W</text></svg>
    </TaskButton>
    <TaskButton $w={57} $run $on $ml={7}>
      <svg width="30" height="30" viewBox="0 0 30 30" fill="none" stroke="#fff" strokeWidth="1.200"><circle cx="15" cy="15" r="15" fill="#4277c0" stroke="none" /><path d="M15 3L5 13l10 13 10-13zM5 13l10 3.500L25 13M15 3v23M15 3l-5 11.500L15 26l5-11.500z" /></svg>
    </TaskButton>
    <Stacked />
    <Tray>
      <TrayIcon $mr={12} width="16" height="10" viewBox="0 0 16 10"><path d="M1 9l7-7.500L15 9" fill="none" stroke="#111" strokeWidth="1.500" /></TrayIcon>
      <TrayIcon $mr={11} width="20" height="16" viewBox="0 0 20 16"><path d="M4 15C-1 14 0 8 3 7.500 3 2 8 0 11 1.500c3 0 4.500 3 4.500 5C20 7 21 14 16 15z" fill="#777" stroke="#222" /><path d="M4 14.500C2 12 4 9 7 9.500 9 6 13 7 14 9.500c4 0 5 4 2 5z" fill="#eee" /></TrayIcon>
      <TrayIcon $mr={13} width="19" height="12" viewBox="0 0 19 12"><path d="M.8.800h15.400v10.400H.8z" fill="none" stroke="#111" strokeWidth="1.500" /><path d="M3 3h4v6H3zM17 4h2v4h-2z" fill="#111" /></TrayIcon>
      <TrayIcon $mr={11} width="16" height="16" viewBox="0 0 16 16" fill="none" stroke="#222" strokeWidth="1.300"><path d="M1 15C1 7 7 1 15 1M5 15C5 9 9 5 15 5M9 15c0-3 3-6 6-6" /><circle cx="13.500" cy="13.500" r="1.800" fill="#111" stroke="none" /></TrayIcon>
      <TrayIcon $mr={14} width="20" height="18" viewBox="0 0 20 18" fill="none" stroke="#111" strokeWidth="1.300"><path d="M1 6h3l4-4v14l-4-4H1zM11 6q2 3 0 6M14 4q3.500 5 0 10M17 1.500q4.500 7.500 0 15" /></TrayIcon>
      <Lang>ENG</Lang>
      <Clock>13:10<br />21-07-2020</Clock>
      <svg width="32" height="32" viewBox="0 0 32 32">
        <path d="M1 2h20v16H13l-5 4v-4H1z" fill="#000" /><path d="M5 6.500h12M5 10h12M5 13.500h9" stroke="#fff" strokeWidth="1.400" />
        <circle cx="20" cy="21" r="10" fill="#c6c9d2" stroke="#777" />
        <text x="20" y="26" textAnchor="middle" fontFamily="Open Sans" fontSize="14" fill="#111">3</text>
      </svg>
      <ShowDesktop />
    </Tray>
  </Taskbar>
);

export default function App() {
  return (
    <Desktop>
      <Global />
      <DesktopLabel>N</DesktopLabel>
      <Window>
        <TitleBar>
          <Gem />
          <TitleText>Stream4* - IBM® SPSS® Modeler Subscription</TitleText>
          <WinControls>
            <svg width="13" height="13" viewBox="0 0 13 13" stroke="#999"><path d="M0 6.500h13" /></svg>
            <svg width="13" height="13" viewBox="0 0 13 13" stroke="#888" fill="none"><path d="M.5.500h12v12H.5z" /></svg>
            <CloseX c="#888" />
          </WinControls>
        </TitleBar>
        <MenuBar>{menus.map(([w, m], i) => <MenuItem key={i} $w={w}>{m}</MenuItem>)}</MenuBar>
        <Middle>
          <Workspace>
            <Tools />
            <Canvas>
              <CanvasNode $x={277} $y={202} $start>
                <Disc $d={62} $b={2.5} $ml={44}><Doc /></Disc>
                <NodeName $mt={9}>datasets_Iris_model</NodeName>
              </CanvasNode>
              <Link />
              <CanvasNode $x={323} $y={373}>
                <Disc $d={58} $b={1.5} $sel><Doc /></Disc>
                <NodeName $mt={10}>Var. File</NodeName>
              </CanvasNode>
              <VThumb />
              <HThumb />
            </Canvas>
          </Workspace>
          <Gutter><i /><i /><i /></Gutter>
          <SidePanels />
        </Middle>
        <Sources />
        <StatusBar>
          <StatusBox $w={52}>...</StatusBox>
          <StatusBox $w={139} $ls={-0.25}>172MB / 210MB</StatusBox>
        </StatusBar>
      </Window>
      <VarFileDialog />
      <Tasks />
    </Desktop>
  );
}
